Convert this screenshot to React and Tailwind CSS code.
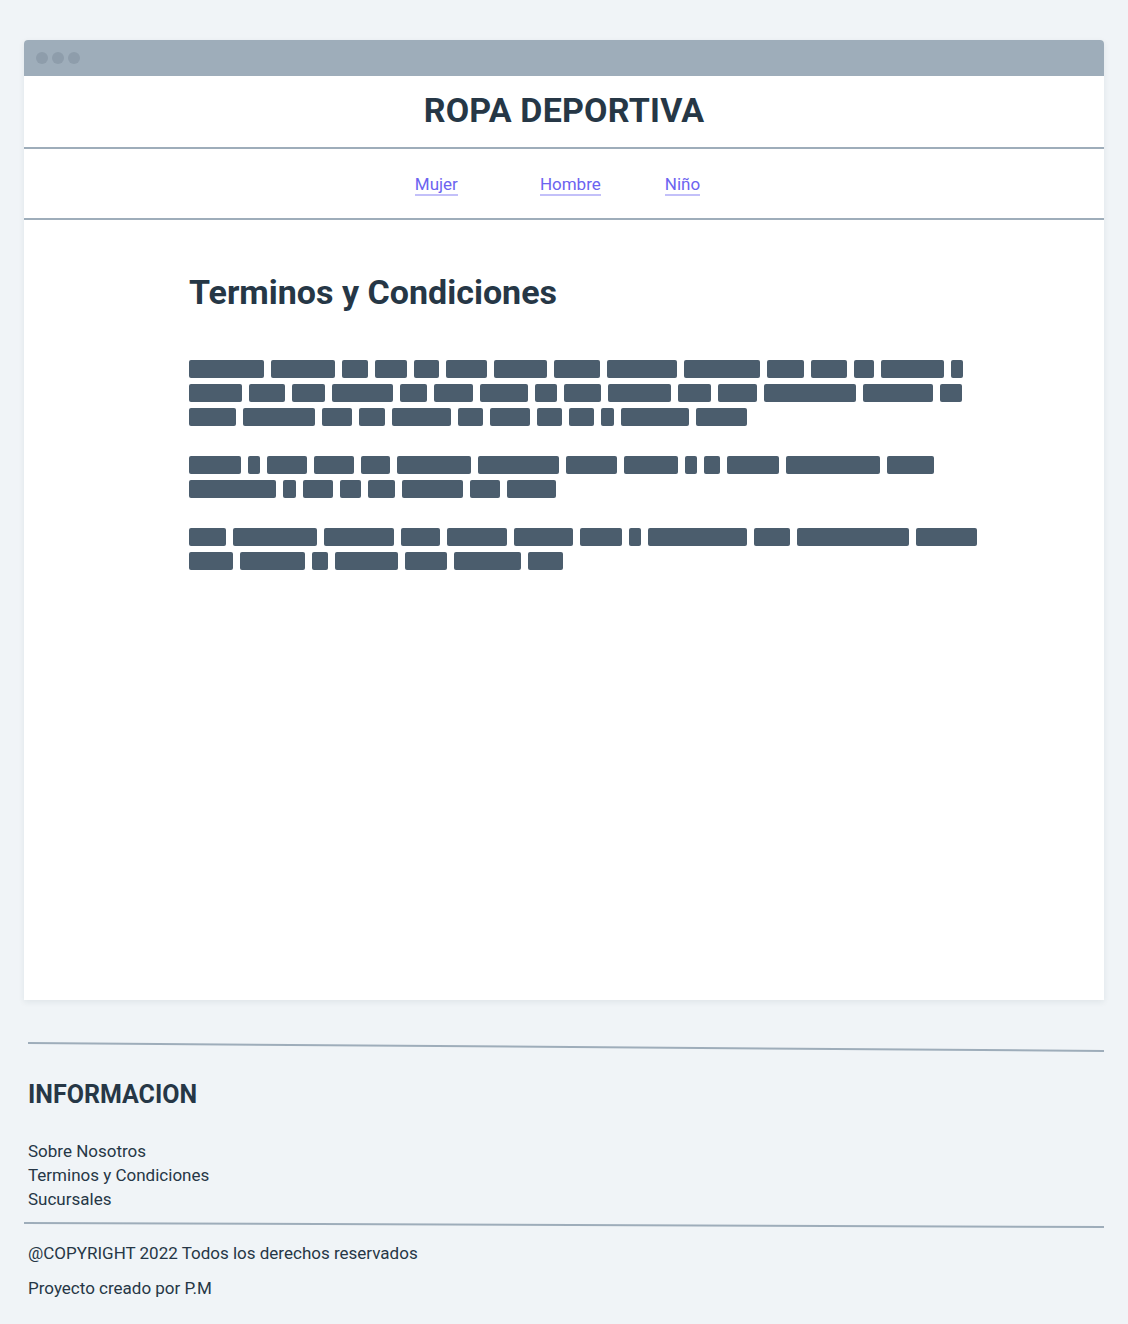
import React from 'react';

// widths of the redacted "words" in each paragraph line
const parrafos = [
  [
    [75, 64, 26, 32, 25, 41, 53, 46, 70, 76, 37, 36, 20, 63, 12],
    [53, 36, 33, 61, 27, 39, 48, 22, 37, 63, 33, 39, 92, 70, 22],
    [47, 72, 30, 26, 59, 25, 40, 25, 25, 13, 68, 51],
  ],
  [
    [52, 12, 40, 40, 29, 74, 81, 51, 54, 12, 16, 52, 94, 47],
    [87, 13, 30, 21, 27, 61, 30, 49],
  ],
  [
    [37, 84, 70, 39, 60, 59, 42, 12, 99, 36, 112, 61],
    [44, 65, 16, 63, 42, 67, 35],
  ],
];

const Linea = ({ y1, y2 }) => (
  <svg className="block w-full h-[14px]" viewBox="0 0 1000 14" preserveAspectRatio="none">
    <line x1="0" y1={y1} x2="1000" y2={y2} stroke="#9eadba" strokeWidth="2" vectorEffect="non-scaling-stroke" />
  </svg>
);

const App = () => {
  return (
    <div
      className="min-h-screen bg-[#f0f4f7] pt-10 pb-6 text-[#263746]"
      style={{ fontFamily: 'Roboto, "Noto Sans", sans-serif' }}
    >
      {/* Ventana */}
      <div className="mx-6 bg-white rounded-t-[4px] shadow-[0_2px_6px_rgba(30,50,70,0.08)]">
        <div className="h-9 bg-[#9eadba] rounded-t-[4px] flex items-center gap-1 pl-3">
          <span className="w-3 h-3 rounded-full bg-[#8e9dab]" />
          <span className="w-3 h-3 rounded-full bg-[#8e9dab]" />
          <span className="w-3 h-3 rounded-full bg-[#8e9dab]" />
        </div>

        <header className="h-[73px] flex items-center justify-center border-b-2 border-[#9eadba]">
          <h1 className="text-[34px] font-bold tracking-[0.2px] leading-none -mt-[4px]">ROPA DEPORTIVA</h1>
        </header>

        <nav className="h-[71px] flex items-center justify-center border-b-2 border-[#9eadba] text-[17px] text-[#6c63f0] pr-[13px]">
          <a className="border-b-2 border-[#c3c0f9] leading-[20px] mt-[3px]">Mujer</a>
          <a className="border-b-2 border-[#c3c0f9] leading-[20px] mt-[3px] ml-[82px]">Hombre</a>
          <a className="border-b-2 border-[#c3c0f9] leading-[20px] mt-[3px] ml-[64px]">Niño</a>
        </nav>

        <main className="h-[780px] pl-[165px] pr-[120px] pt-[52px]">
          <h2 className="text-[34px] font-bold leading-[40px]">Terminos y Condiciones</h2>
          <div className="mt-[48px] flex flex-col gap-[30px]">
            {parrafos.map((p, i) => (
              <div key={i} className="flex flex-col gap-[6px]">
                {p.map((fila, j) => (
                  <div key={j} className="flex gap-[7px]">
                    {fila.map((w, k) => (
                      <span key={k} className="h-[18px] rounded-[2px] bg-[#4b5d6d]" style={{ width: w }} />
                    ))}
                  </div>
                ))}
              </div>
            ))}
          </div>
        </main>
      </div>

      {/* Pie */}
      <footer className="mt-[38px] pr-6">
        <div className="pl-7">
          <Linea y1={5} y2={13} />
        </div>
        <div className="pl-7">
          <h3 className="mt-[27px] text-[25px] font-bold leading-[32px]">INFORMACION</h3>
          <ul className="mt-[28px] text-[17px] leading-[24px]">
            <li>Sobre Nosotros</li>
            <li>Terminos y Condiciones</li>
            <li>Sucursales</li>
          </ul>
        </div>
        <div className="pl-6 mt-[8px]">
          <Linea y1={4} y2={8} />
        </div>
        <div className="pl-7 text-[17px] leading-[24px]">
          <p className="mt-[8px]">@COPYRIGHT 2022 Todos los derechos reservados</p>
          <p className="mt-[11px]">Proyecto creado por P.M</p>
        </div>
      </footer>
    </div>
  );
};

export default App;
